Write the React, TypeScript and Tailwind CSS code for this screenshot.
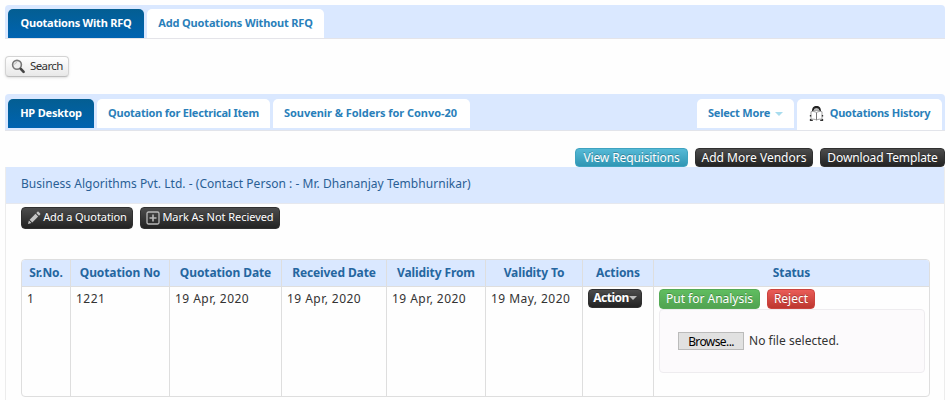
import type { ReactNode } from "react";
import clsx from "clsx";

function Tab({ children, active, className }: { children: ReactNode; active?: boolean; className?: string }) {
    return (
        <button
            className={clsx(
                "flex h-[29px] shrink-0 items-center justify-center rounded-t-[5px] font-['Noto_Sans',sans-serif] text-[11px] font-bold whitespace-nowrap",
                active ? "bg-linear-to-b from-[#045e92] to-[#0063b1] text-white" : "bg-white text-[#2a7fba]",
                className
            )}
        >
            {children}
        </button>
    );
}

const buttonColors = {
    dark: "border-[#303030] from-[#4c4c4c] to-[#232323]",
    info: "border-[#3fa3c0] from-[#55b9d6] to-[#2f96b4]",
    success: "border-[#55aa55] from-[#60bd60] to-[#51a351]",
    danger: "border-[#cc443f] from-[#ea5c57] to-[#bd362f]",
};

function Button({
    children,
    color = "dark",
    className,
}: {
    children: ReactNode;
    color?: keyof typeof buttonColors;
    className?: string;
}) {
    return (
        <button
            className={clsx(
                "flex shrink-0 items-center justify-center rounded-[4px] border bg-linear-to-b whitespace-nowrap text-white [text-shadow:0_-1px_0_rgba(0,0,0,0.25)]",
                buttonColors[color],
                className
            )}
        >
            {children}
        </button>
    );
}

function SearchIcon() {
    return (
        <svg width="15" height="15" viewBox="0 0 15 15" fill="none" className="shrink-0">
            <circle cx="6" cy="5.8" r="4.4" stroke="#777" strokeWidth="1.6" fill="#eee" />
            <path d="M3.6 5.6a2.5 2.5 0 0 1 2.3-2.1" stroke="#bbb" />
            <path d="m9.8 9.8 2.8 3" stroke="#444" strokeWidth="2.6" strokeLinecap="round" />
        </svg>
    );
}

function ReaderIcon() {
    return (
        <svg width="15" height="17" viewBox="0 0 15 17" fill="none" className="shrink-0">
            <path d="M3 6.6C3 2.6 4.6 1 7.5 1S12 2.600 12 6.600l-1.800-1c-.2-1.700-1-2.400-2.700-2.400S5 3.900 4.800 5.600z" fill="#222" />
            <path d="M5.2 4.200h4.600M5 5.600h5" stroke="#777" strokeWidth=".7" />
            <path d="M7.500 7.600C5.800 6.400 4 6.300 2 6.700v7.600c2-.3 3.900-.2 5.500.8 1.600-1 3.500-1.100 5.500-.8V6.700c-2-.4-3.800-.3-5.500.9z" fill="#fff" stroke="#888" strokeWidth=".8" />
            <path d="M7.500 7.600v7.300" stroke="#777" />
            <path d="M1.500 10v1.500M1.500 14v1.400h2.300M13.500 10v1.500M13.500 14v1.400h-2.300" stroke="#333" strokeWidth="1.300" />
        </svg>
    );
}

function PencilIcon() {
    return (
        <svg width="14" height="14" viewBox="0 0 14 14" fill="#c4c4c4" className="shrink-0">
            <path d="m1 13 .9-3.500 2.600 2.600z" />
            <path d="m2.600 8.700 5.900-5.900 2.700 2.700-5.900 5.900z" />
            <path d="m9.300 2 1.200-1.200c.3-.3.700-.3 1 0l1.700 1.700c.3.3.3.7 0 1L12 4.700z" />
        </svg>
    );
}

function PlusIcon() {
    return (
        <svg width="14" height="14" viewBox="0 0 14 14" fill="none" stroke="#b8b8b8" strokeWidth="1.300" className="shrink-0">
            <rect x="1" y="1" width="12" height="12" rx="1.500" />
            <path d="M7 3.500v7M3.500 7h7" strokeWidth="1.600" />
        </svg>
    );
}

function Caret({ className }: { className: string }) {
    return (
        <svg width="8" height="4" viewBox="0 0 8 4" fill="currentColor" className={clsx("shrink-0", className)}>
            <path d="M0 0h8L4 4z" />
        </svg>
    );
}

function HeadCell({ children }: { children: ReactNode }) {
    return (
        <div className="flex h-[27px] items-center justify-center border-b border-[#dedede] bg-[#dae8ff] pb-px text-[12px] font-bold tracking-[-0.1px] whitespace-nowrap text-[#2566a0]">
            {children}
        </div>
    );
}

const columns = [
    { title: "Sr.No.", value: "1" },
    { title: "Quotation No", value: "1221" },
    { title: "Quotation Date", value: "19 Apr, 2020" },
    { title: "Received Date", value: "19 Apr, 2020" },
    { title: "Validity From", value: "19 Apr, 2020" },
    { title: "Validity To", value: "19 May, 2020" },
];

export default function App() {
    return (
        <div className="flex h-[400px] w-[950px] flex-col overflow-hidden bg-[#fefefe] px-[5px] pt-[5px] font-['Noto_Sans',sans-serif] text-[12px] text-[#333]">
            <nav className="flex h-[34px] shrink-0 gap-[3px] rounded-t-[4px] border-b border-[#e4e4e9] bg-[#dae8ff] px-[3px] pt-[4px]">
                <Tab active className="w-[136px] pb-px tracking-[-0.22px]">Quotations With RFQ</Tab>
                <Tab className="w-[177px] pb-px tracking-[-0.15px]">Add Quotations Without RFQ</Tab>
            </nav>

            <button className="mt-[17px] flex h-[21px] w-[64px] shrink-0 items-center gap-[4px] rounded-[4px] border border-[#d4d4d4] border-b-[#bdbdbd] bg-linear-to-b from-white to-[#e8e8e8] pb-px pl-[5px] text-[11.5px] tracking-[-0.6px] shadow-sm">
                <SearchIcon />
                Search
            </button>

            <nav className="mt-[17px] flex h-[37px] shrink-0 gap-[3px] rounded-t-[4px] border-b border-[#e2e4ea] bg-[#dae8ff] px-[3px] pt-[5px]">
                <Tab active className="w-[86px] tracking-[-0.2px]">HP Desktop</Tab>
                <Tab className="w-[173px] tracking-[-0.22px]">Quotation for Electrical Item</Tab>
                <Tab className="w-[197px] pr-[2px] tracking-[-0.05px]">Souvenir &amp; Folders for Convo-20</Tab>
                <Tab className="ml-auto w-[97px] tracking-[-0.2px]">
                    Select More
                    <Caret className="ml-[5px] text-[#a8dcee]" />
                </Tab>
                <Tab className="h-[31px] w-[145px] gap-[6px] pb-[2px] tracking-[-0.22px]">
                    <ReaderIcon />
                    Quotations History
                </Tab>
            </nav>

            <div className="mt-[17px] flex h-[19px] shrink-0 justify-end gap-[7px]">
                <Button color="info" className="w-[113px] tracking-[-0.12px]">View Requisitions</Button>
                <Button className="w-[118px] tracking-[0.02px]">Add More Vendors</Button>
                <Button className="w-[125px] tracking-[-0.12px]">Download Template</Button>
            </div>

            <section className="flex grow flex-col border-x border-[#ececec]">
                <h2 className="flex h-[37px] shrink-0 items-center border-b border-[#e6e8ee] bg-[#dae8ff] pb-[3px] pl-[15px] tracking-[0.04px] text-[#2a5f95]">
                    <span>Business Algorithms Pvt. Ltd. - (Contact Person : - Mr. Dhananjay Tembhurnikar)</span>
                </h2>

                <div className="mt-[3px] ml-[15px] flex h-[22px] shrink-0 gap-[7px]">
                    <Button className="w-[112px] gap-[2px] text-[11px] tracking-[-0.08px]">
                        <PencilIcon />
                        <span className="pb-[2px]">Add a Quotation</span>
                    </Button>
                    <Button className="w-[140px] gap-[2px] text-[11px] tracking-[-0.05px]">
                        <PlusIcon />
                        <span className="pb-[2px]">Mark As Not Recieved</span>
                    </Button>
                </div>

                <div className="mt-[30px] ml-[15px] grid h-[138px] w-[909px] shrink-0 grid-cols-[49px_99px_112px_105px_99px_97px_71px_1fr] overflow-hidden rounded-[4px] border border-[#dedede]">
                    {columns.map((column) => (
                        <div key={column.title} className="border-r border-[#dedede]">
                            <HeadCell>{column.title}</HeadCell>
                            <div className="pt-[3px] pl-[5px] tracking-[0.45px]">{column.value}</div>
                        </div>
                    ))}
                    <div className="border-r border-[#dedede]">
                        <HeadCell>Actions</HeadCell>
                        <div className="pt-[2px] pl-[5px]">
                            <Button className="h-[19px] w-[54px] pb-px font-bold tracking-[-0.5px]">
                                Action
                                <Caret className="text-[#bbb]" />
                            </Button>
                        </div>
                    </div>
                    <div>
                        <HeadCell>Status</HeadCell>
                        <div className="pt-[2px] pr-[4px] pl-[5px]">
                            <div className="flex gap-[7px]">
                                <Button color="success" className="h-[20px] w-[101px] tracking-[-0.02px]">Put for Analysis</Button>
                                <Button color="danger" className="h-[20px] w-[48px] tracking-[0px]">Reject</Button>
                            </div>
                            <div className="flex h-[64px] items-center rounded-[4px] border border-[#eeecef] bg-[#fcfafc] pl-[18px]">
                                <button className="h-[18px] w-[66px] border border-[#bbb] bg-[#e1e1e1] text-[12px] leading-[15px] tracking-[-0.6px] text-black">
                                    Browse...
                                </button>
                                <span className="pl-[5px] tracking-[0.03px]">No file selected.</span>
                            </div>
                        </div>
                    </div>
                </div>
            </section>
        </div>
    );
}
